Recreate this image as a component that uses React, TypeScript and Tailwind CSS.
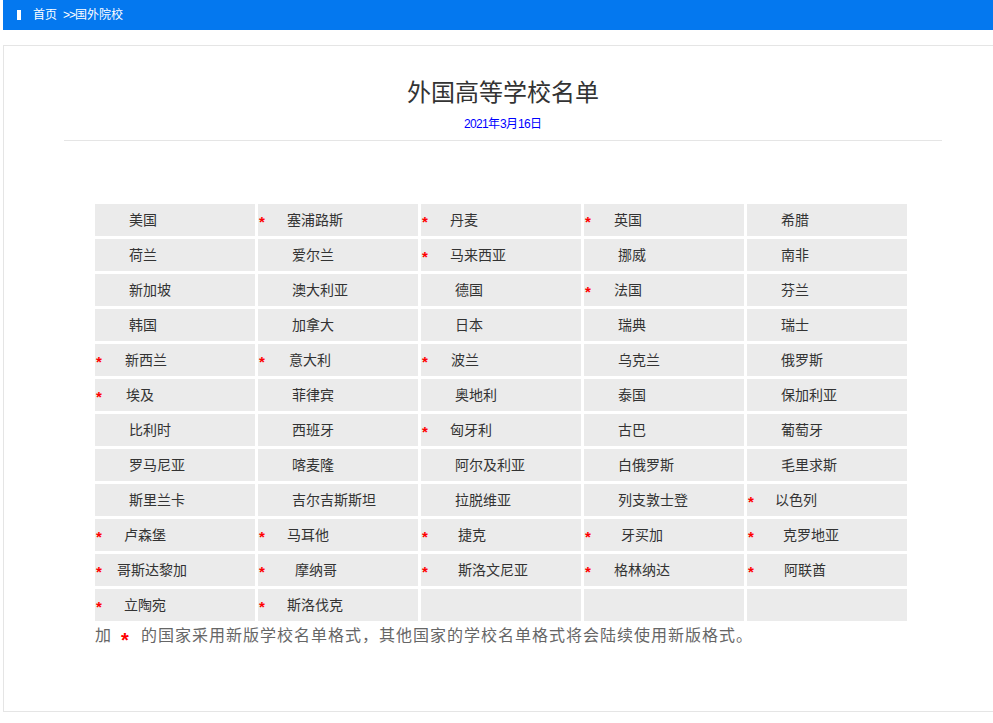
const CJK = "font-['Liberation_Sans','Noto_Sans_CJK_SC',sans-serif]";

type Cell = { n?: string; ml?: string };

const rows: Cell[][] = [
  [{ n: '美国' }, { n: '塞浦路斯', ml: 'ml-[21px]' }, { n: '丹麦', ml: 'ml-[21px]' }, { n: '英国', ml: 'ml-[22px]' }, { n: '希腊' }],
  [{ n: '荷兰' }, { n: '爱尔兰' }, { n: '马来西亚', ml: 'ml-[21px]' }, { n: '挪威' }, { n: '南非' }],
  [{ n: '新加坡' }, { n: '澳大利亚' }, { n: '德国' }, { n: '法国', ml: 'ml-[22px]' }, { n: '芬兰' }],
  [{ n: '韩国' }, { n: '加拿大' }, { n: '日本' }, { n: '瑞典' }, { n: '瑞士' }],
  [{ n: '新西兰', ml: 'ml-[22px]' }, { n: '意大利', ml: 'ml-[23px]' }, { n: '波兰', ml: 'ml-[22px]' }, { n: '乌克兰' }, { n: '俄罗斯' }],
  [{ n: '埃及', ml: 'ml-[23px]' }, { n: '菲律宾' }, { n: '奥地利' }, { n: '泰国' }, { n: '保加利亚' }],
  [{ n: '比利时' }, { n: '西班牙' }, { n: '匈牙利', ml: 'ml-[21px]' }, { n: '古巴' }, { n: '葡萄牙' }],
  [{ n: '罗马尼亚' }, { n: '喀麦隆' }, { n: '阿尔及利亚' }, { n: '白俄罗斯' }, { n: '毛里求斯' }],
  [{ n: '斯里兰卡' }, { n: '吉尔吉斯斯坦' }, { n: '拉脱维亚' }, { n: '列支敦士登' }, { n: '以色列', ml: 'ml-[20px]' }],
  [{ n: '卢森堡', ml: 'ml-[21px]' }, { n: '马耳他', ml: 'ml-[21px]' }, { n: '捷克', ml: 'ml-[29px]' }, { n: '牙买加', ml: 'ml-[29px]' }, { n: '克罗地亚', ml: 'ml-[28px]' }],
  [{ n: '哥斯达黎加', ml: 'ml-[14px]' }, { n: '摩纳哥', ml: 'ml-[29px]' }, { n: '斯洛文尼亚', ml: 'ml-[29px]' }, { n: '格林纳达', ml: 'ml-[22px]' }, { n: '阿联酋', ml: 'ml-[29px]' }],
  [{ n: '立陶宛', ml: 'ml-[21px]' }, { n: '斯洛伐克', ml: 'ml-[21px]' }, {}, {}, {}],
];

function CountryCell({ n, ml }: Cell) {
  return (
    <div className="flex h-[32px] items-center bg-[#ebebeb] text-[14px] text-[#333333]">
      {ml ? (
        <>
          <span className="ml-[1px] mt-[3px] w-[7px] text-[15px] font-bold leading-none text-[#ff0000]">*</span>
          <span className={ml}>{n}</span>
        </>
      ) : n ? (
        <span className="ml-[34px]">{n}</span>
      ) : null}
    </div>
  );
}

export default function App() {
  return (
    <div className={`h-[723px] w-[993px] overflow-hidden bg-white pl-[3px] ${CJK}`}>
      <div className="flex h-[30px] w-[1000px] items-center bg-[#0478ef] pl-[14px] text-[12px] text-white">
        <span className="h-[10px] w-[4px] bg-white" />
        <span className="ml-[12px]">首页</span>
        <span className="ml-[6px] tracking-[-1px]">&gt;&gt;</span>
        <span>国外院校</span>
      </div>
      <div className="mt-[15px] h-[667px] w-[1000px] border border-[#e5e5e5] bg-white">
        <div className="mx-[60px] h-[95px] border-b border-[#e5e5e5] pt-[28px] text-center">
          <h1 className="text-[24px] font-normal leading-[38px] text-[#333333]">外国高等学校名单</h1>
          <p className="mt-[4px] text-[12px] leading-[16px] text-[#0000ff]">
            <span className="tracking-[-0.67px]">2021</span>年<span className="tracking-[-0.67px]">3</span>月
            <span className="tracking-[-0.67px]">16</span>日
          </p>
        </div>
        <div className="ml-[91px] mt-[63px] w-[812px]">
          <div className="grid grid-cols-[repeat(5,160px)] gap-[3px]">
            {rows.flat().map((c, i) => (
              <CountryCell key={i} {...c} />
            ))}
          </div>
          <p className="mt-[5px] flex items-start text-[16px] leading-[20px] tracking-[1px] text-[#666666]">
            <span>加</span>
            <span className="ml-[9px] mt-[4px] w-[20px] text-[20px] font-bold leading-none text-[#ff0000]">*</span>
            <span>的国家采用新版学校名单格式，其他国家的学校名单格式将会陆续使用新版格式。</span>
          </p>
        </div>
      </div>
    </div>
  );
}
